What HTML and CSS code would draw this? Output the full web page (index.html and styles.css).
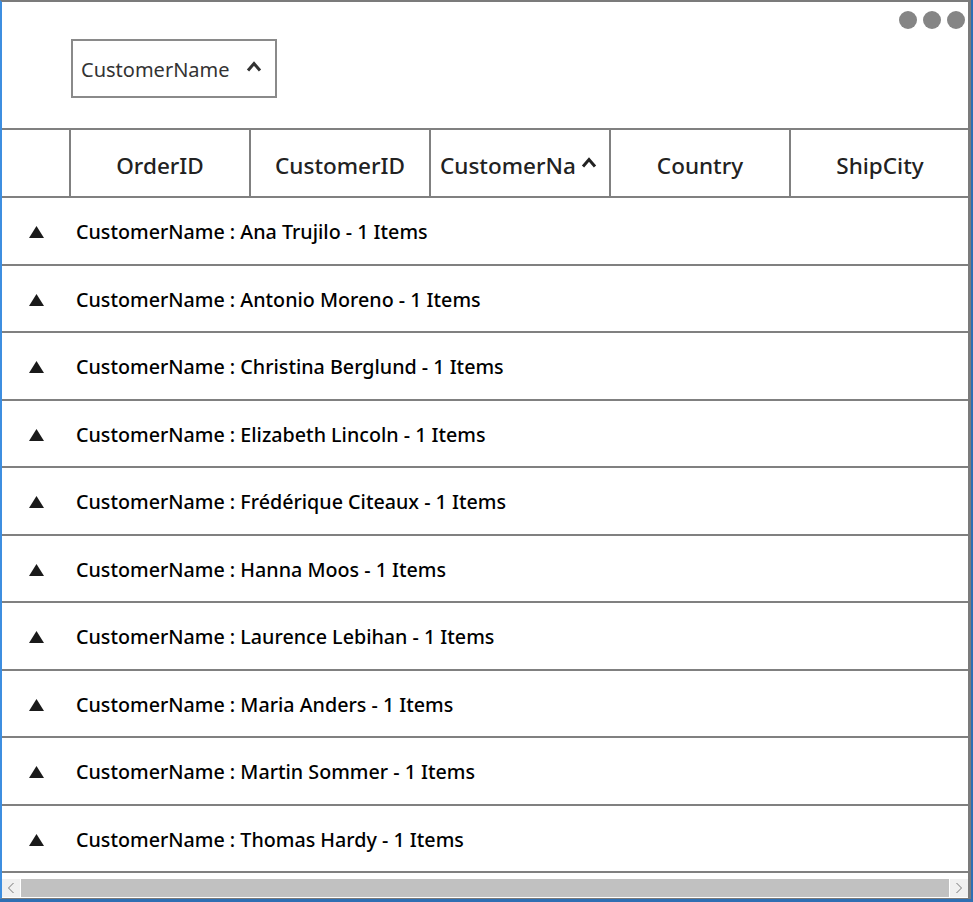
FILE: index.html
```html
<!DOCTYPE html>
<html>
<head>
<meta charset="utf-8">
<link rel="stylesheet" href="styles.css">
</head>
<body>
<div class="screen">
  <div class="frame">
    <div class="drop-area">
      <div class="group-chip">
        <span class="chip-label">CustomerName</span>
        <svg class="chip-chevron" width="16" height="12" viewBox="0 0 16 12"><path d="M2 10.5 L8 3.5 L14 10.5" fill="none" stroke="#333" stroke-width="3"/></svg>
      </div>
      <div class="dots"><span class="dot"></span><span class="dot"></span><span class="dot"></span></div>
    </div>
    <div class="header-row">
      <div class="indent-cell"></div>
      <div class="hcell">OrderID</div>
      <div class="hcell">CustomerID</div>
      <div class="hcell sorted"><span class="htext">CustomerNa</span><svg class="sort-chevron" width="16" height="12" viewBox="0 0 16 12"><path d="M2 10.5 L8 3.5 L14 10.5" fill="none" stroke="#222" stroke-width="3"/></svg></div>
      <div class="hcell">Country</div>
      <div class="hcell last">ShipCity</div>
    </div>
    <div class="rows">
      <div class="group-row"><span class="tri"><svg width="15" height="12" viewBox="0 0 15 12"><polygon points="7.5,0 15,12 0,12" fill="#1a1a1a"/></svg></span><span class="gtext">CustomerName : Ana Trujilo - 1 Items</span></div>
      <div class="group-row"><span class="tri"><svg width="15" height="12" viewBox="0 0 15 12"><polygon points="7.5,0 15,12 0,12" fill="#1a1a1a"/></svg></span><span class="gtext">CustomerName : Antonio Moreno - 1 Items</span></div>
      <div class="group-row"><span class="tri"><svg width="15" height="12" viewBox="0 0 15 12"><polygon points="7.5,0 15,12 0,12" fill="#1a1a1a"/></svg></span><span class="gtext">CustomerName : Christina Berglund - 1 Items</span></div>
      <div class="group-row"><span class="tri"><svg width="15" height="12" viewBox="0 0 15 12"><polygon points="7.5,0 15,12 0,12" fill="#1a1a1a"/></svg></span><span class="gtext">CustomerName : Elizabeth Lincoln - 1 Items</span></div>
      <div class="group-row"><span class="tri"><svg width="15" height="12" viewBox="0 0 15 12"><polygon points="7.5,0 15,12 0,12" fill="#1a1a1a"/></svg></span><span class="gtext">CustomerName : Frédérique Citeaux - 1 Items</span></div>
      <div class="group-row"><span class="tri"><svg width="15" height="12" viewBox="0 0 15 12"><polygon points="7.5,0 15,12 0,12" fill="#1a1a1a"/></svg></span><span class="gtext">CustomerName : Hanna Moos - 1 Items</span></div>
      <div class="group-row"><span class="tri"><svg width="15" height="12" viewBox="0 0 15 12"><polygon points="7.5,0 15,12 0,12" fill="#1a1a1a"/></svg></span><span class="gtext">CustomerName : Laurence Lebihan - 1 Items</span></div>
      <div class="group-row"><span class="tri"><svg width="15" height="12" viewBox="0 0 15 12"><polygon points="7.5,0 15,12 0,12" fill="#1a1a1a"/></svg></span><span class="gtext">CustomerName : Maria Anders - 1 Items</span></div>
      <div class="group-row"><span class="tri"><svg width="15" height="12" viewBox="0 0 15 12"><polygon points="7.5,0 15,12 0,12" fill="#1a1a1a"/></svg></span><span class="gtext">CustomerName : Martin Sommer - 1 Items</span></div>
      <div class="group-row"><span class="tri"><svg width="15" height="12" viewBox="0 0 15 12"><polygon points="7.5,0 15,12 0,12" fill="#1a1a1a"/></svg></span><span class="gtext">CustomerName : Thomas Hardy - 1 Items</span></div>
    </div>
    <div class="spacer"></div>
    <div class="hscroll">
      <div class="sbtn"><svg width="8" height="12" viewBox="0 0 8 12"><path d="M6.5 1 L1.5 6 L6.5 11" fill="none" stroke="#777" stroke-width="1"/></svg></div>
      <div class="thumb"></div>
      <div class="sbtn"><svg width="8" height="12" viewBox="0 0 8 12"><path d="M1.5 1 L6.5 6 L1.5 11" fill="none" stroke="#777" stroke-width="1"/></svg></div>
    </div>
  </div>
</div>
</body>
</html>
```
FILE: styles.css
```css
html, body {
  margin: 0;
  padding: 0;
  background: #ffffff;
}
.screen {
  width: 973px;
  height: 902px;
  box-sizing: border-box;
  background: #2f6fb3;
  padding: 0 2px 3px 0;
  overflow: hidden;
}
.frame {
  box-sizing: border-box;
  width: 971px;
  height: 899px;
  background: #ffffff;
  border-left: 2px solid #3d8ee0;
  border-top: 2px solid #7b7b7b;
  border-right: 3px solid #7b7b7b;
  border-bottom: 1px solid #7b7b7b;
  display: flex;
  flex-direction: column;
  font-family: "Noto Sans", "Open Sans", sans-serif;
  overflow: hidden;
}
.drop-area {
  height: 126px;
  flex: none;
  border-bottom: 2px solid #808080;
  display: flex;
  align-items: center;
  position: relative;
}
.group-chip {
  margin-left: 69px;
  margin-top: 6px;
  width: 206px;
  height: 59px;
  box-sizing: border-box;
  border: 2px solid #8a8a8a;
  display: flex;
  align-items: center;
  padding-left: 8px;
  padding-top: 3px;
  color: #333333;
}
.chip-label {
  font-size: 20px;
}
.chip-chevron {
  margin-left: 16px;
  margin-top: -7px;
}
.dots {
  position: absolute;
  top: 9px;
  right: 3px;
  display: flex;
  gap: 6px;
}
.dot {
  width: 18px;
  height: 18px;
  border-radius: 50%;
  background: #858585;
}
.header-row {
  flex: none;
  height: 66px;
  border-bottom: 2px solid #808080;
  display: flex;
}
.indent-cell {
  width: 67px;
  flex: none;
  border-right: 2px solid #808080;
}
.hcell {
  width: 178px;
  flex: none;
  border-right: 2px solid #808080;
  display: flex;
  align-items: center;
  justify-content: center;
  padding-top: 4px;
  box-sizing: content-box;
  font-size: 22.5px;
  font-weight: 500;
  color: #222222;
  overflow: hidden;
  white-space: nowrap;
}
.hcell.last {
  border-right: none;
}
.hcell.sorted {
  justify-content: flex-start;
  padding-left: 9px;
  padding-right: 0;
  width: 169px;
}
.htext {
  flex: none;
}
.sort-chevron {
  margin-left: 5px;
  margin-top: -6px;
  flex: none;
}
.rows {
  flex: none;
}
.group-row {
  box-sizing: border-box;
  height: 67.5px;
  border-bottom: 2px solid #808080;
  display: flex;
  align-items: center;
  font-size: 19.7px;
  font-weight: 500;
  color: #000000;
}
.tri {
  width: 68px;
  flex: none;
  display: flex;
  justify-content: center;
  padding-top: 3px;
}
.gtext {
  padding-left: 6px;
  padding-top: 2px;
}
.spacer {
  flex: 1;
}
.hscroll {
  flex: none;
  height: 18px;
  display: flex;
  margin-bottom: 1px;
}
.sbtn {
  width: 18px;
  flex: none;
  background: #f0f0f0;
  display: flex;
  align-items: center;
  justify-content: center;
}
.thumb {
  flex: 1;
  background: #c1c1c1;
  margin: 0 1px;
}
```
